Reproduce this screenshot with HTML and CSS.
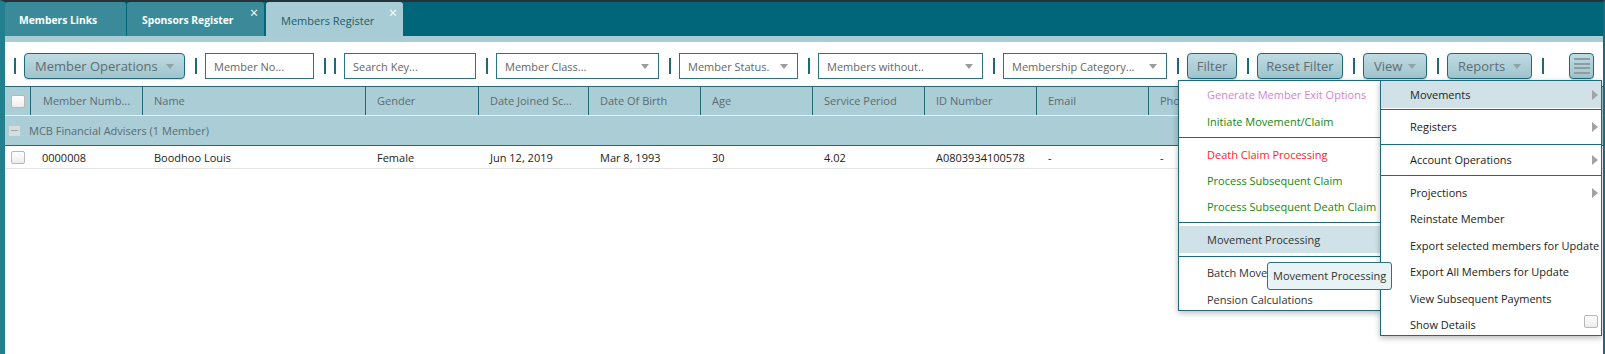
FILE: index.html
```html
<!DOCTYPE html>
<html>
<head>
<meta charset="utf-8">
<link rel="stylesheet" href="styles.css">
</head>
<body>
<div class="app">
  <div class="tabbar">
    <div class="tab t1">Members Links</div>
    <div class="tab t2">Sponsors Register<span class="close">×</span></div>
    <div class="tab t3 active">Members Register<span class="close">×</span></div>
  </div>
  <div class="strip"></div>
  <div class="toolbar">
    <span class="sep first"></span>
    <div class="btn w-ops">Member Operations<i class="caret"></i></div>
    <span class="sep"></span>
    <div class="field w-mno">Member No...</div>
    <span class="sep"></span><span class="sep"></span>
    <div class="field w-sk">Search Key...</div>
    <span class="sep"></span>
    <div class="field w-mc">Member Class...<i class="caret"></i></div>
    <span class="sep"></span>
    <div class="field w-ms">Member Status.<i class="caret"></i></div>
    <span class="sep"></span>
    <div class="field w-mw">Members without..<i class="caret"></i></div>
    <span class="sep"></span>
    <div class="field w-cat">Membership Category...<i class="caret"></i></div>
    <span class="sep"></span>
    <div class="btn center w-filter">Filter</div>
    <span class="sep"></span>
    <div class="btn center w-reset">Reset Filter</div>
    <span class="sep"></span>
    <div class="btn w-view">View<i class="caret"></i></div>
    <span class="sep"></span>
    <div class="btn w-rep">Reports<i class="caret"></i></div>
    <span class="sep"></span>
    <div class="btn burger"><b></b><b></b><b></b><b></b></div>
  </div>

  <div class="grid">
    <div class="row head">
      <div class="c c0"><span class="cb"></span></div>
      <div class="c c1">Member Numb...</div>
      <div class="c c2">Name</div>
      <div class="c c3">Gender</div>
      <div class="c c4">Date Joined Sc...</div>
      <div class="c c5">Date Of Birth</div>
      <div class="c c6">Age</div>
      <div class="c c7">Service Period</div>
      <div class="c c8">ID Number</div>
      <div class="c c9">Email</div>
      <div class="c c10">Phone</div>
      <div class="c c11">Address</div>
      <div class="c c12">Status</div>
      <div class="c c13">Class</div>
    </div>
    <div class="row group">
      <span class="minus"></span>
      <span class="gtext">MCB Financial Advisers (1 Member)</span>
    </div>
    <div class="row data">
      <div class="c c0"><span class="cb"></span></div>
      <div class="c c1">0000008</div>
      <div class="c c2">Boodhoo Louis</div>
      <div class="c c3">Female</div>
      <div class="c c4">Jun 12, 2019</div>
      <div class="c c5">Mar 8, 1993</div>
      <div class="c c6">30</div>
      <div class="c c7">4.02</div>
      <div class="c c8">A0803934100578</div>
      <div class="c c9">-</div>
      <div class="c c10">-</div>
    </div>
  </div>

  <div class="menu sub">
    <div class="item h27 orchid">Generate Member Exit Options</div>
    <div class="item h27 green">Initiate Movement/Claim</div>
    <div class="msep s1"></div>
    <div class="item red">Death Claim Processing</div>
    <div class="item green">Process Subsequent Claim</div>
    <div class="item green">Process Subsequent Death Claim</div>
    <div class="msep s2"></div>
    <div class="item h27 hl">Movement Processing</div>
    <div class="msep s3"></div>
    <div class="item">Batch Movement Processing</div>
    <div class="item last">Pension Calculations</div>
  </div>

  <div class="menu main">
    <div class="item h27 hl">Movements<i class="arrow"></i></div>
    <div class="msep m1"></div>
    <div class="item reg">Registers<i class="arrow"></i></div>
    <div class="msep"></div>
    <div class="item acc">Account Operations<i class="arrow"></i></div>
    <div class="msep m3"></div>
    <div class="item">Projections<i class="arrow"></i></div>
    <div class="item">Reinstate Member</div>
    <div class="item h27">Export selected members for Update</div>
    <div class="item">Export All Members for Update</div>
    <div class="item h27">View Subsequent Payments</div>
    <div class="item show">Show Details<span class="cb mcb"></span></div>
  </div>

  <div class="tooltip">Movement Processing</div>
</div>
</body>
</html>
```

FILE: styles.css
```css
* { box-sizing: border-box; }
body { margin: 0; background: #fff; font-family: "Open Sans", "DejaVu Sans", sans-serif; }

.app {
  position: relative;
  width: 1605px;
  height: 354px;
  border-top: 2px solid #22343a;
  border-left: 5px solid #217f8e;
  border-right: 2px solid #1e6a79;
  overflow: hidden;
  background: #fff;
}

/* tabs */
.tabbar { height: 34px; background: #01667a; display: flex; }
.tab {
  position: relative;
  height: 34px;
  line-height: 31px;
  padding-top: 3px;
  padding-left: 14px;
  background: #3a8a9a;
  color: #fff;
  font-size: 10.3px;
  font-weight: 700;
  border-radius: 3px 3px 0 0;
  white-space: nowrap;
}
.t1 { width: 121px; }
.t2 { width: 137px; margin-left: 1px; padding-left: 15px; }
.t3 { width: 137px; margin-left: 2px; padding-left: 15px; }
.tab.active { background: #a8ccd5; color: #1f5a68; font-weight: 400; font-size: 11px; }
.close {
  position: absolute; right: 6px; top: 4px;
  font-size: 14px; line-height: 14px; font-weight: 400; color: #fff;
}
.strip { height: 6px; background: #a9ccd5; }

/* toolbar */
.toolbar {
  height: 44px;
  padding: 11px 9px 7px 9px;
  display: flex;
  align-items: center;
}
.sep { flex: none; width: 2px; height: 16px; background: #1e6a79; margin: 0 8px 0 10px; }
.sep.first { margin-left: 0; }
.sep + .sep { margin-left: 0; }

.field {
  position: relative; flex: none;
  height: 26px;
  border: 1px solid #2a7585;
  background: #fff;
  color: #666;
  font-size: 11px;
  padding-left: 8px;
  display: flex; align-items: center;
  white-space: nowrap;
}
.btn {
  position: relative; flex: none;
  height: 26px;
  border: 1px solid #1e6a79;
  border-radius: 4px;
  background: linear-gradient(#bedbe2, #a0c4cd);
  box-shadow: 0 1px 1px rgba(0,0,0,0.15);
  color: #5e6e73;
  font-size: 13px;
  padding: 0 10px;
  display: flex; align-items: center;
  white-space: nowrap;
}
.btn.center { justify-content: center; padding: 0; }
.caret {
  position: absolute; right: 9px; top: 50%; margin-top: -2px;
  width: 0; height: 0;
  border-left: 4.5px solid transparent;
  border-right: 4.5px solid transparent;
  border-top: 5px solid #9c9c9c;
}
.btn .caret { border-top-color: #8ea3a8; right: 10px; }

.w-ops { width: 161px; }
.w-mno { width: 109px; }
.w-sk { width: 132px; }
.w-mc { width: 163px; }
.w-ms { width: 119px; }
.w-mw { width: 165px; }
.w-cat { width: 164px; }
.w-filter { width: 50px; }
.w-reset { width: 86px; }
.w-view { width: 64px; }
.w-rep { width: 85px; }
.burger {
  margin-left: auto; width: 25px; padding: 0;
  flex-direction: column; justify-content: center; gap: 2.5px;
}
.burger b { display: block; width: 16px; height: 2px; background: #8d9ea2; }

/* grid */
.grid { width: 1598px; }
.row { display: flex; }
.c { flex: none; white-space: nowrap; overflow: hidden; font-size: 11px; padding-left: 11px; }
.c0 { width: 26px; padding-left: 6px; display: flex; align-items: center; }
.c1 { width: 112px; }
.c2 { width: 223px; }
.c3 { width: 113px; }
.c4 { width: 110px; }
.c5, .c6, .c7, .c8, .c9, .c10, .c11, .c12 { width: 112px; }
.c13 { flex: 1; }

.head {
  height: 30px;
  background: #abcdd6;
  border-top: 1px solid #1e6a79;
  border-bottom: 1px solid #e6f0f3;
}
.head .c { height: 28px; line-height: 28px; color: #5b6c72; border-right: 1px solid #1e6a79; }
.head .c1 { padding-left: 12px; }
.head .c13 { border-right: 0; }

.group {
  height: 30px;
  background: #abcdd6;
  border-bottom: 1px solid #1e6a79;
  align-items: center;
  padding-left: 4px;
}
.minus { width: 11px; height: 10px; background: #d9dcdd; position: relative; margin-right: 9px; }
.minus::after { content: ""; position: absolute; left: 2px; right: 2px; top: 4px; height: 1px; background: #9aa; }
.gtext { font-size: 11px; color: #5b6c72; }

.data { height: 23px; border-bottom: 1px solid #e4e4e4; }
.data .c { height: 22px; line-height: 24px; color: #222; }
.data .c0 { line-height: 22px; }

.cb {
  display: inline-block;
  width: 14px; height: 13px;
  border: 1px solid #b8b8b8;
  border-radius: 2px;
  background: linear-gradient(#fff, #ececec);
}

/* menus */
.menu {
  position: absolute;
  background: #fff;
  border: 1px solid #1e6a79;
  box-shadow: 0 2px 6px rgba(0,0,0,0.28);
  font-size: 11px;
  color: #333;
  overflow: hidden;
}
.sub { left: 1173px; top: 78px; width: 203px; height: 231px; }
.main { left: 1375px; top: 78px; width: 222px; height: 256px; color: #222; }

.item {
  position: relative;
  height: 26px; line-height: 26px;
  padding-left: 28px;
  white-space: nowrap;
}
.main .item { padding-left: 29px; }
.item.h27 { height: 27px; line-height: 27px; }
.item.hl { background: #d0e2e8; }
.orchid { color: #d77fd7; }
.green { color: #128712; }
.red { color: #ff1e1e; }
.item.last { height: 24px; line-height: 28px; }

.msep { height: 1px; background: #1e6a79; }
.s1 { margin: 2px 0 4px; }
.s2 { margin: 2px 0 3px; }
.s3 { margin: 3px 0 3px; }
.m1 { margin-top: 1px; }
.m3 { margin-bottom: 4px; }
.item.reg { height: 34px; line-height: 34px; }
.item.acc { height: 30px; line-height: 30px; }
.item.show { height: 23px; line-height: 26px; }

.arrow {
  position: absolute; right: 3px; top: 50%; margin-top: -5px;
  width: 0; height: 0;
  border-top: 5px solid transparent;
  border-bottom: 5px solid transparent;
  border-left: 6px solid #a3a3a3;
}
.mcb { position: absolute; right: 3px; top: 3px; }

.tooltip {
  position: absolute;
  left: 1262px; top: 260px;
  width: 125px; height: 28px;
  background: #e8f3f6;
  border: 1px solid #2a7585;
  border-radius: 3px;
  font-size: 11px;
  color: #333;
  line-height: 26px;
  padding-left: 5px;
  white-space: nowrap;
}
```
